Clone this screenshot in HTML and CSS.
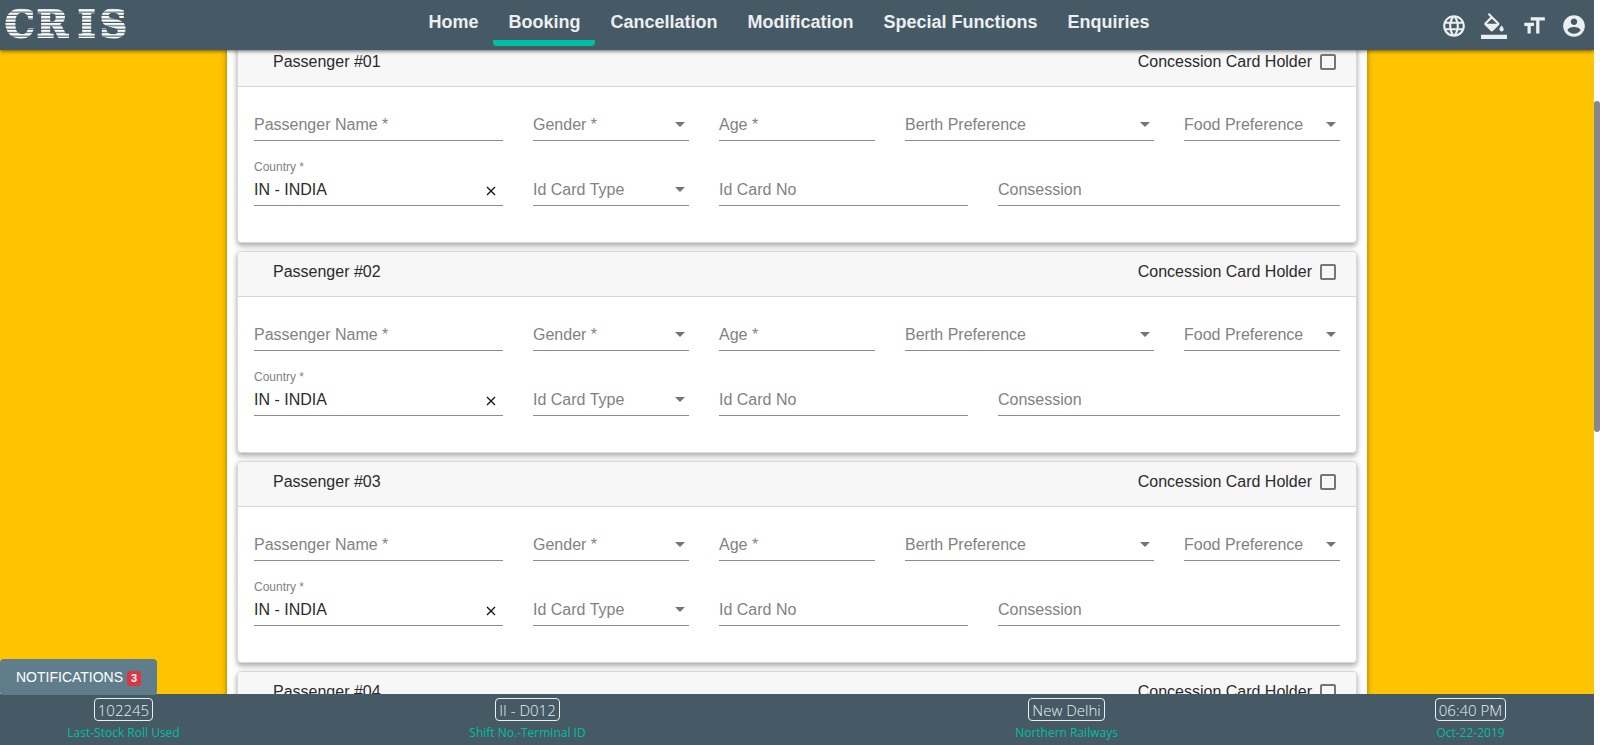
FILE: index.html
```html
<!DOCTYPE html>
<html lang="en">
<head>
<meta charset="utf-8">
<meta name="viewport" content="width=device-width, initial-scale=1">
<title>CRIS Booking</title>
<link rel="stylesheet" href="styles.css">
</head>
<body>
<div class="app">
  <div class="screen">
    <header class="topbar">
      <a class="brand" href="#" aria-label="CRIS">
        <svg class="logo" viewBox="0 0 132 38" aria-hidden="true">
          <defs>
            <pattern id="stripes" width="132" height="3.43" y="3.2" patternUnits="userSpaceOnUse">
              <rect width="132" height="2.3" fill="#fff"/>
            </pattern>
            <mask id="bars" maskUnits="userSpaceOnUse" x="0" y="0" width="132" height="38">
              <rect width="132" height="38" fill="url(#stripes)"/>
            </mask>
          </defs>
          <text class="logo-text" y="31" x="3 35 76 98" mask="url(#bars)">CRIS</text>
        </svg>
      </a>
      <nav class="menu">
        <a class="menu-item" href="#">Home</a>
        <a class="menu-item active" href="#">Booking</a>
        <a class="menu-item" href="#">Cancellation</a>
        <a class="menu-item" href="#">Modification</a>
        <a class="menu-item" href="#">Special Functions</a>
        <a class="menu-item" href="#">Enquiries</a>
      </nav>
      <div class="tools">
        <button class="tool" type="button" aria-label="Language"><svg viewBox="0 0 24 24"><path d="M11.99 2C6.47 2 2 6.48 2 12s4.47 10 9.99 10C17.52 22 22 17.52 22 12S17.52 2 11.99 2zm6.93 6h-2.95c-.32-1.25-.78-2.45-1.38-3.56 1.84.63 3.37 1.91 4.33 3.56zM12 4.04c.83 1.2 1.48 2.53 1.91 3.96h-3.82c.43-1.43 1.08-2.76 1.91-3.96zM4.26 14C4.1 13.36 4 12.69 4 12s.1-1.36.26-2h3.38c-.08.66-.14 1.32-.14 2s.06 1.34.14 2H4.26zm.82 2h2.95c.32 1.25.78 2.45 1.38 3.56-1.84-.63-3.37-1.9-4.33-3.56zm2.95-8H5.08c.96-1.66 2.49-2.93 4.33-3.56C8.81 5.55 8.35 6.75 8.03 8zM12 19.96c-.83-1.2-1.48-2.53-1.91-3.96h3.82c-.43 1.43-1.08 2.76-1.91 3.96zM14.34 14H9.66c-.09-.66-.16-1.32-.16-2s.07-1.35.16-2h4.68c.09.65.16 1.32.16 2s-.07 1.34-.16 2zm.25 5.56c.6-1.11 1.06-2.31 1.38-3.56h2.95c-.96 1.65-2.49 2.93-4.33 3.56zM16.36 14c.08-.66.14-1.32.14-2s-.06-1.34-.14-2h3.38c.16.64.26 1.31.26 2s-.1 1.36-.26 2h-3.38z"/></svg></button>
        <button class="tool" type="button" aria-label="Theme colour"><svg viewBox="0 0 24 24"><path d="M16.56 8.94L7.62 0 6.21 1.41l2.38 2.38-5.15 5.15c-.59.59-.59 1.54 0 2.12l5.5 5.5c.29.29.68.44 1.06.44s.77-.15 1.06-.44l5.5-5.5c.59-.58.59-1.53 0-2.12zM5.21 10L10 5.21 14.79 10H5.21zM19 11.5s-2 2.17-2 3.5c0 1.1.9 2 2 2s2-.9 2-2c0-1.33-2-3.5-2-3.5zM0 20h24v4H0z"/></svg></button>
        <button class="tool" type="button" aria-label="Text size"><svg viewBox="0 0 24 24"><path d="M9 4v3h5v12h3V7h5V4H9zm-6 8h3v7h3v-7h3V9H3v3z"/></svg></button>
        <button class="tool" type="button" aria-label="Account"><svg viewBox="0 0 24 24"><path d="M12 2C6.48 2 2 6.48 2 12s4.48 10 10 10 10-4.48 10-10S17.52 2 12 2zm0 3c1.66 0 3 1.34 3 3s-1.34 3-3 3-3-1.34-3-3 1.34-3 3-3zm0 14.2c-2.5 0-4.71-1.28-6-3.22.03-1.99 4-3.08 6-3.08 1.99 0 5.97 1.09 6 3.08-1.29 1.94-3.5 3.22-6 3.22z"/></svg></button>
      </div>
    </header>

    <main class="content">
      <form class="panel">
        <section class="card">
          <div class="card-head"><h2 class="card-title">Passenger #01</h2><label class="check">Concession Card Holder<input type="checkbox"></label></div>
          <div class="fields">
            <div class="field w3"><label for="name1">Passenger Name *</label><input id="name1" type="text"></div>
            <div class="field w2 drop"><label for="gender1">Gender *</label><select id="gender1"><option></option></select></div>
            <div class="field w2"><label for="age1">Age *</label><input id="age1" type="text"></div>
            <div class="field w3 drop"><label for="berth1">Berth Preference</label><select id="berth1"><option></option></select></div>
            <div class="field w2 drop"><label for="food1">Food Preference</label><select id="food1"><option></option></select></div>
            <div class="field w3 filled"><label for="country1">Country *</label><input id="country1" type="text" value="IN - INDIA"><button class="clear" type="button" aria-label="Clear country"><svg viewBox="0 0 10 10"><path d="M1 1l8 8M9 1l-8 8"/></svg></button></div>
            <div class="field w2 drop"><label for="idtype1">Id Card Type</label><select id="idtype1"><option></option></select></div>
            <div class="field w3"><label for="idno1">Id Card No</label><input id="idno1" type="text"></div>
            <div class="field w4"><label for="cons1">Consession</label><input id="cons1" type="text"></div>
          </div>
        </section>

        <section class="card">
          <div class="card-head"><h2 class="card-title">Passenger #02</h2><label class="check">Concession Card Holder<input type="checkbox"></label></div>
          <div class="fields">
            <div class="field w3"><label for="name2">Passenger Name *</label><input id="name2" type="text"></div>
            <div class="field w2 drop"><label for="gender2">Gender *</label><select id="gender2"><option></option></select></div>
            <div class="field w2"><label for="age2">Age *</label><input id="age2" type="text"></div>
            <div class="field w3 drop"><label for="berth2">Berth Preference</label><select id="berth2"><option></option></select></div>
            <div class="field w2 drop"><label for="food2">Food Preference</label><select id="food2"><option></option></select></div>
            <div class="field w3 filled"><label for="country2">Country *</label><input id="country2" type="text" value="IN - INDIA"><button class="clear" type="button" aria-label="Clear country"><svg viewBox="0 0 10 10"><path d="M1 1l8 8M9 1l-8 8"/></svg></button></div>
            <div class="field w2 drop"><label for="idtype2">Id Card Type</label><select id="idtype2"><option></option></select></div>
            <div class="field w3"><label for="idno2">Id Card No</label><input id="idno2" type="text"></div>
            <div class="field w4"><label for="cons2">Consession</label><input id="cons2" type="text"></div>
          </div>
        </section>

        <section class="card">
          <div class="card-head"><h2 class="card-title">Passenger #03</h2><label class="check">Concession Card Holder<input type="checkbox"></label></div>
          <div class="fields">
            <div class="field w3"><label for="name3">Passenger Name *</label><input id="name3" type="text"></div>
            <div class="field w2 drop"><label for="gender3">Gender *</label><select id="gender3"><option></option></select></div>
            <div class="field w2"><label for="age3">Age *</label><input id="age3" type="text"></div>
            <div class="field w3 drop"><label for="berth3">Berth Preference</label><select id="berth3"><option></option></select></div>
            <div class="field w2 drop"><label for="food3">Food Preference</label><select id="food3"><option></option></select></div>
            <div class="field w3 filled"><label for="country3">Country *</label><input id="country3" type="text" value="IN - INDIA"><button class="clear" type="button" aria-label="Clear country"><svg viewBox="0 0 10 10"><path d="M1 1l8 8M9 1l-8 8"/></svg></button></div>
            <div class="field w2 drop"><label for="idtype3">Id Card Type</label><select id="idtype3"><option></option></select></div>
            <div class="field w3"><label for="idno3">Id Card No</label><input id="idno3" type="text"></div>
            <div class="field w4"><label for="cons3">Consession</label><input id="cons3" type="text"></div>
          </div>
        </section>

        <section class="card">
          <div class="card-head"><h2 class="card-title">Passenger #04</h2><label class="check">Concession Card Holder<input type="checkbox"></label></div>
        </section>
      </form>
    </main>

    <footer class="status">
      <button class="notify" type="button">NOTIFICATIONS <span class="count">3</span></button>
      <div class="stat"><span class="stat-value">102245</span><span class="stat-name">Last-Stock Roll Used</span></div>
      <div class="stat wide"><span class="stat-value">II - D012</span><span class="stat-name">Shift No.-Terminal ID</span></div>
      <div class="stat wide"><span class="stat-value">New Delhi</span><span class="stat-name">Northern Railways</span></div>
      <div class="stat"><span class="stat-value">06:40 PM</span><span class="stat-name">Oct-22-2019</span></div>
    </footer>
  </div>
  <div class="scrollbar"><div class="thumb"></div></div>
</div>
</body>
</html>
```
FILE: styles.css
```css
* { box-sizing: border-box; }

body {
  margin: 0;
  font-family: "Liberation Sans", Arial, sans-serif;
  font-size: 16px;
  line-height: 24px;
  color: #2b2b2b;
}

button, input, select { font: inherit; color: inherit; }

.app { display: flex; height: 100vh; overflow: hidden; }

.screen {
  flex: 1;
  min-width: 0;
  display: flex;
  flex-direction: column;
  overflow: hidden;
}

.scrollbar { width: 6px; padding-top: 101px; background: #fff; }
.thumb { height: 331px; border-radius: 3px; background: #888; }

/* Top bar */
.topbar {
  position: relative;
  z-index: 2;
  display: grid;
  grid-template-columns: 1fr auto 1fr;
  height: 50px;
  background: #455a64;
  color: #eceff1;
  box-shadow: 0 1px 4px rgba(0, 0, 0, .6);
}

.brand { padding: 6px 2px; }
.logo { display: block; width: 132px; height: 38px; overflow: visible; }
.logo-text {
  font-family: "DejaVu Serif", serif;
  font-weight: bold;
  font-size: 37px;
  fill: #fff;
  stroke: #fff;
  stroke-width: 2;
}

.menu { display: flex; align-items: flex-start; margin-right: 16px; }
.menu-item {
  height: 46px;
  padding: 10px 15px 0;
  border-bottom: 6px solid transparent;
  border-radius: 4px;
  font-size: 18px;
  font-weight: bold;
  color: inherit;
  text-decoration: none;
}
.menu-item.active {
  background: linear-gradient(#00bfa5, #00bfa5) 0 100% / 100% 6px no-repeat border-box;
}

.tools {
  display: flex;
  justify-content: flex-end;
  align-items: center;
  gap: 14px;
  padding: 2px 7px 0 0;
}
.tool { padding: 0; border: 0; background: none; }
.tool svg { display: block; width: 26px; height: 26px; fill: #eceff1; }

/* Passenger list */
.content {
  flex: 1;
  min-height: 0;
  overflow: hidden;
  background: #ffc400;
}

.panel {
  max-width: 1140px;
  margin: -19px auto 0;
  padding: 10px;
  display: grid;
  gap: 8px;
  background: #fff;
  box-shadow: 0 2px 6px rgba(0, 0, 0, .4);
}

.card {
  border: 1px solid #d8d8d8;
  border-radius: 4px;
  background: #fff;
  box-shadow: 0 3px 4px rgba(0, 0, 0, .24), 0 1px 8px rgba(0, 0, 0, .14);
  overflow: hidden;
}

.card-head {
  display: flex;
  justify-content: space-between;
  padding: 8px 20px 12px 35px;
  border-bottom: 1px solid #d8d8d8;
  background: #f7f7f7;
}
.card-title { margin: 0; font-size: 16px; font-weight: normal; }

.check { display: flex; align-items: center; gap: 8px; }
.check input {
  appearance: none;
  width: 16px;
  height: 16px;
  margin: 0;
  border: 2px solid #757575;
  border-radius: 2px;
}

.fields {
  display: grid;
  grid-template-columns: repeat(12, 1fr);
  gap: 16px 0;
  margin: 0 -15px;
  padding: 5px 16px 36px;
}

.w2 { grid-column: span 2; }
.w3 { grid-column: span 3; }
.w4 { grid-column: span 4; }

/* Label and control share the lower row; a filled field lifts its label */
.field {
  display: grid;
  grid-template-columns: minmax(0, 1fr) auto;
  grid-template-rows: 20px 28px;
  margin: 0 15px;
  border-bottom: 1px solid #8c8c8c;
}
.field label {
  grid-area: 2 / 1 / 3 / 3;
  line-height: 26px;
  color: #828282;
  pointer-events: none;
  z-index: 1;
}
.field input, .field select {
  grid-area: 2 / 1 / 3 / 3;
  width: 100%;
  height: 26px;
  padding: 0;
  border: 0;
  outline: 0;
  background: none;
  appearance: none;
}
.field.filled label {
  grid-row: 1;
  font-size: 12px;
  line-height: 20px;
}

.drop::after {
  content: "";
  grid-area: 2 / 2;
  width: 10px;
  height: 5px;
  margin: 10px 4px 0 0;
  background: #757575;
  clip-path: polygon(0 0, 100% 0, 50% 100%);
}

.clear {
  grid-area: 2 / 2;
  padding: 0;
  height: 28px;
  margin-right: 7px;
  border: 0;
  background: none;
  z-index: 1;
}
.clear svg { display: block; width: 10px; height: 10px; }
.clear path { stroke: #111; stroke-width: 1.3; fill: none; }

/* Status bar */
.status {
  position: relative;
  display: flex;
  height: 51px;
  padding-top: 4px;
  background: #455a64;
  font-family: "Open Sans", "Noto Sans", sans-serif;
}
.stat {
  flex: 247 1 0;
  display: flex;
  flex-direction: column;
  align-items: center;
}
.stat.wide { flex-grow: 539; }
.stat:first-of-type { margin-right: 11px; }
.stat:last-of-type { margin-left: 11px; }
.stat-value {
  padding: 1px 3px 0;
  border: 1px solid #eceff1;
  border-radius: 4px;
  font-size: 15px;
  font-weight: 300;
  line-height: 20px;
  color: #eceff1;
}
.stat-name { font-size: 12px; line-height: 24px; color: #00bfa5; }

.notify {
  position: absolute;
  left: 0;
  bottom: 50px;
  height: 36px;
  padding: 0 16px;
  border: 0;
  border-radius: 4px;
  background: #607d8b;
  color: #fff;
  font-family: "Liberation Sans", Arial, sans-serif;
  font-size: 14px;
  font-weight: 500;
}
.count {
  display: inline-block;
  padding: 0 4px;
  border-radius: 3px;
  background: #dc3545;
  font-size: 11px;
  font-weight: bold;
  line-height: 15px;
}
```
